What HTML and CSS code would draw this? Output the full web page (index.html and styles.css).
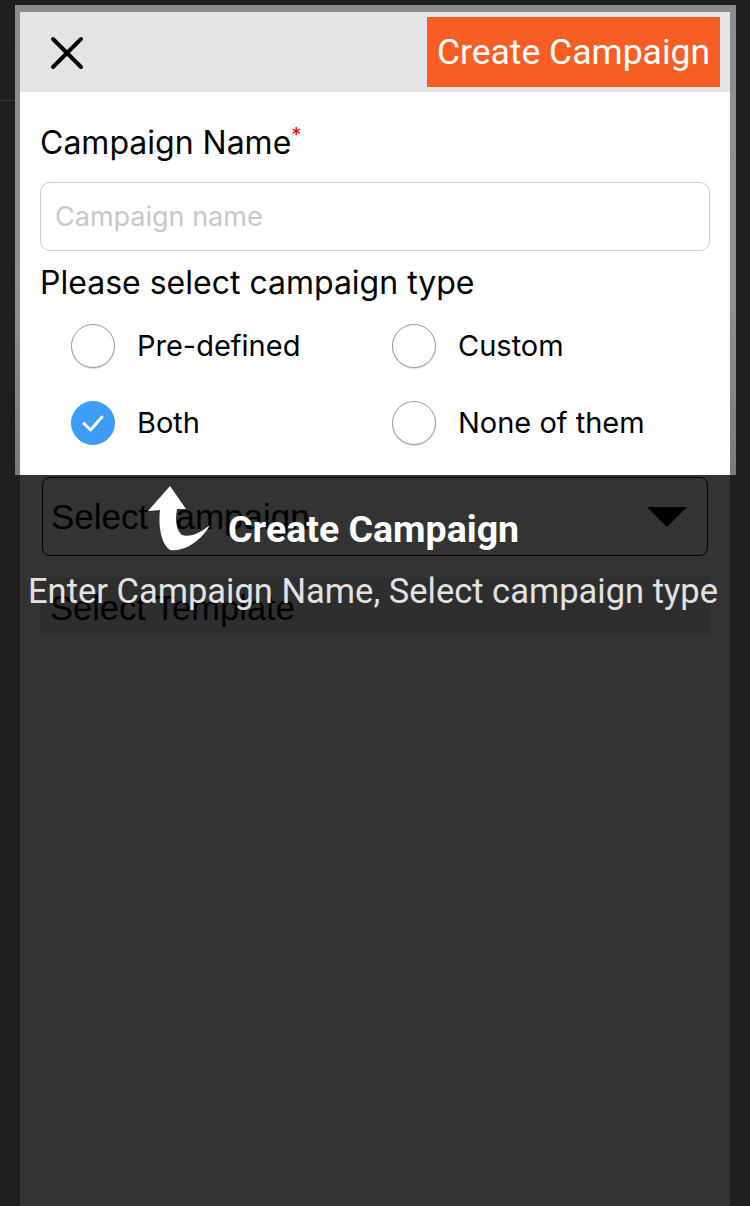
FILE: index.html
```html
<!DOCTYPE html>
<html>
<head>
<meta charset="utf-8">
<link rel="stylesheet" href="styles.css">
</head>
<body>
<div class="screen">
  <div class="app">
    <div class="spot">
      <div class="card">
        <div class="card-head">
          <svg class="close" width="34" height="34" viewBox="0 0 34 34"><path d="M3 3 L31 31 M31 3 L3 31" stroke="#000" stroke-width="4" stroke-linecap="round" fill="none"/></svg>
          <div class="create-btn">Create Campaign</div>
        </div>
        <div class="card-body">
          <div class="label">Campaign Name<span class="req">*</span></div>
          <div class="input">Campaign name</div>
          <div class="label type-label">Please select campaign type</div>
          <div class="radios">
            <div class="radio"><span class="dot"></span><span>Pre-defined</span></div>
            <div class="radio"><span class="dot"></span><span>Custom</span></div>
            <div class="radio"><span class="dot on"><svg width="44" height="44" viewBox="0 0 44 44"><path d="M13 22.5 L19.5 29 L31 16" stroke="#fff" stroke-width="3" fill="none" stroke-linecap="round" stroke-linejoin="round"/></svg></span><span>Both</span></div>
            <div class="radio"><span class="dot"></span><span>None of them</span></div>
          </div>
        </div>
      </div>
    </div>
    <div class="panel">
      <div class="select">
        <span>Select campaign</span>
        <span class="caret"></span>
      </div>
      <div class="template">Select Template</div>
      <div class="tip">
        <svg class="arrow" width="80" height="80" viewBox="0 0 80 80"><path d="M30 8 L46 31 L37 31 C35 42 36 52 42 57 C50 60 62 54 70 47 C62 62 45 74 30 72 C21 66 18 48 20 32 L8 33 Z" fill="#fff"/></svg>
        <div class="tip-title">Create Campaign</div>
        <div class="tip-text">Enter Campaign Name, Select campaign type</div>
      </div>
    </div>
  </div>
  <div class="edge-line"></div>
</div>
</body>
</html>
```

FILE: styles.css
```css
html, body {
  margin: 0;
  padding: 0;
}
body {
  background: #1f1f1f;
  width: 750px;
  height: 1206px;
  overflow: hidden;
  font-family: Inter, "Noto Sans", sans-serif;
}
.screen {
  position: relative;
  height: 1206px;
  padding-top: 5px;
  box-sizing: border-box;
}
.edge-line {
  position: absolute;
  left: 0;
  top: 100px;
  width: 15px;
  height: 1px;
  background: #3a3a3a;
}
.app {
  margin-left: 15px;
  width: 721px;
  height: 1201px;
  display: flex;
  flex-direction: column;
}
.spot {
  padding: 7px 6px 0 5px;
  background: linear-gradient(180deg, #8c8c8c 0%, #909090 60%, #7a7a7a 100%);
}
.card {
  background: #fff;
}
.card-head {
  height: 80px;
  background: #e4e6e5;
  display: flex;
  align-items: center;
  justify-content: space-between;
  padding: 0 10px 0 30px;
}
.close {
  display: block;
  margin-top: 1px;
}
.create-btn {
  background: #f55f25;
  color: #fff;
  font-family: Roboto, sans-serif;
  font-size: 35.5px;
  height: 70px;
  line-height: 70px;
  width: 293px;
  text-align: center;
}
.card-body {
  padding: 31px 20px 14px 20px;
}
.label {
  font-size: 32px;
  line-height: 40px;
  color: #000;
}
.req {
  color: #f00;
  font-size: 20px;
  vertical-align: top;
  line-height: 24px;
}
.input {
  margin-top: 19px;
  height: 67px;
  border: 1px solid #cfcfcf;
  border-radius: 10px;
  padding-left: 14px;
  font-size: 27px;
  line-height: 67px;
  color: #c7c7cd;
}
.type-label {
  margin-top: 12px;
}
.radios {
  margin-top: 4px;
  padding-left: 31px;
  display: grid;
  grid-template-columns: 321px 1fr;
  grid-auto-rows: 77px;
}
.radio {
  display: flex;
  align-items: center;
  gap: 22px;
  font-size: 29px;
  color: #000;
}
.dot {
  width: 44px;
  height: 44px;
  border-radius: 50%;
  box-sizing: border-box;
  border: 1px solid #9a9a9a;
  box-shadow: 0 1px 1px rgba(0,0,0,0.15);
  background: #fff;
  flex: none;
}
.dot.on {
  background: #3d9cf6;
  border-color: #3d9cf6;
  box-shadow: none;
}
.dot.on svg {
  display: block;
  margin: -1px;
}
.panel {
  flex: 1;
  margin: 0 6px 0 5px;
  background: #333333;
  position: relative;
  padding: 2px 22px 0 22px;
}
.select {
  height: 77px;
  border: 1px solid #000;
  border-radius: 8px;
  display: flex;
  align-items: center;
  justify-content: space-between;
  padding: 0 20px 0 8px;
  font-family: "Liberation Sans", Arial, sans-serif;
  font-size: 35px;
  color: #000;
}
.caret {
  width: 0;
  height: 0;
  border-left: 20px solid transparent;
  border-right: 20px solid transparent;
  border-top: 20px solid #000;
}
.template {
  margin: 21px -2px 0 -2px;
  height: 59px;
  background: #2e2e2e;
  font-family: "Liberation Sans", Arial, sans-serif;
  font-size: 34.5px;
  line-height: 62px;
  padding-left: 10px;
  color: #000;
}
.tip {
  position: absolute;
  left: -20px;
  top: 0;
  width: 750px;
}
.arrow {
  position: absolute;
  left: 140px;
  top: 3px;
}
.tip-title {
  position: absolute;
  left: 228px;
  top: 31px;
  font-family: Roboto, sans-serif;
  font-weight: 700;
  font-size: 37.5px;
  line-height: 46px;
  color: #fff;
}
.tip-text {
  position: absolute;
  left: 28px;
  top: 93px;
  font-family: Roboto, sans-serif;
  font-size: 34.5px;
  line-height: 46px;
  color: #e2e2e2;
  white-space: nowrap;
}
```
